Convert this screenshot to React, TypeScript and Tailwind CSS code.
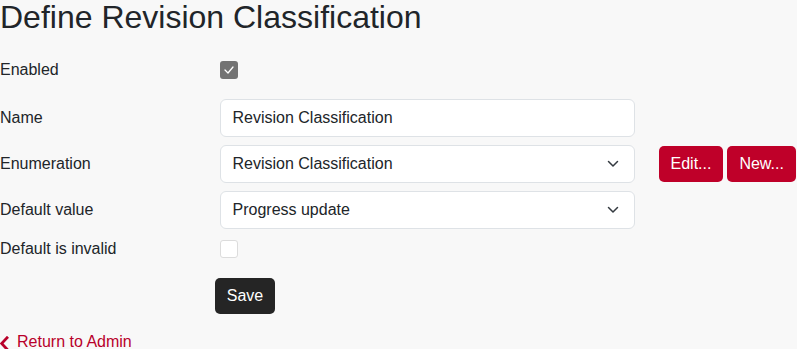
import React from "react";

function Chevron() {
  return (
    <svg width="12" height="8" viewBox="0 0 12 8" className="absolute right-[15px] top-1/2 -translate-y-1/2">
      <polyline points="1.5,1.5 6,6 10.5,1.5" fill="none" stroke="#343a40" strokeWidth="1.5" strokeLinecap="round" strokeLinejoin="round" />
    </svg>
  );
}

function Row({ label, children, className = "" }: { label: string; children?: React.ReactNode; className?: string }) {
  return (
    <div className={`flex items-center h-[38px] ${className}`}>
      <div className="w-[219.5px] shrink-0 text-[16px] text-[#212529]">{label}</div>
      {children}
    </div>
  );
}

export default function App() {
  return (
    <div className="min-h-[349px] w-[797px] bg-[#f8f8f8] overflow-hidden" style={{ fontFamily: '"Liberation Sans", Arial, sans-serif' }}>
      <h2 className="text-[32px] leading-[1.1] text-[#212529] h-[35px] m-0 whitespace-nowrap">Define Revision Classification</h2>

      <Row label="Enabled" className="mt-[16px]">
        <div className="w-[18px] h-[18px] rounded-[3px] bg-[#737373] flex items-center justify-center">
          <svg width="12" height="10" viewBox="0 0 12 10">
            <polyline points="2,5 5,8 10,2" fill="none" stroke="#ffffff" strokeWidth="1.3" strokeLinecap="round" strokeLinejoin="round" />
          </svg>
        </div>
      </Row>

      <Row label="Name" className="mt-[10px]">
        <div className="w-[415.5px] h-[38px] bg-white border border-[#dee2e6] rounded-[6px] px-3 flex items-center text-[16px] text-[#212529]">
          Revision Classification
        </div>
      </Row>

      <Row label="Enumeration" className="mt-2">
        <div className="relative w-[415.5px] h-[38px] bg-white border border-[#dee2e6] rounded-[6px] px-3 flex items-center text-[16px] text-[#212529]">
          Revision Classification
          <Chevron />
        </div>
        <div className="flex gap-[4px] ml-[23.5px] h-[36px]">
          <button className="h-[36px] px-3 rounded-[5px] bg-[#bf0029] text-white text-[16px]">Edit...</button>
          <button className="h-[36px] px-3 rounded-[5px] bg-[#bf0029] text-white text-[16px]">New...</button>
        </div>
      </Row>

      <Row label="Default value" className="mt-2">
        <div className="relative w-[415.5px] h-[38px] bg-white border border-[#dee2e6] rounded-[6px] px-3 flex items-center text-[16px] text-[#212529]">
          Progress update
          <Chevron />
        </div>
      </Row>

      <Row label="Default is invalid" className="mt-px">
        <div className="w-[18px] h-[18px] rounded-[3px] bg-white border border-[#dcdcdc]" />
      </Row>

      <div className="mt-[10px] ml-[215px]">
        <button className="h-[36px] w-[60px] rounded-[5px] bg-[#252525] text-white text-[16px]">Save</button>
      </div>

      <div className="mt-4 flex items-center h-6 text-[16px] text-[#b8002a]">
        <svg width="9" height="15" viewBox="0 0 9 15" className="mr-[8px] mt-[2px]">
          <polyline points="7,1.8 1.6,7.5 7,13.2" fill="none" stroke="#b8002a" strokeWidth="2.8" strokeLinecap="square" />
        </svg>
        Return to Admin
      </div>
    </div>
  );
}
